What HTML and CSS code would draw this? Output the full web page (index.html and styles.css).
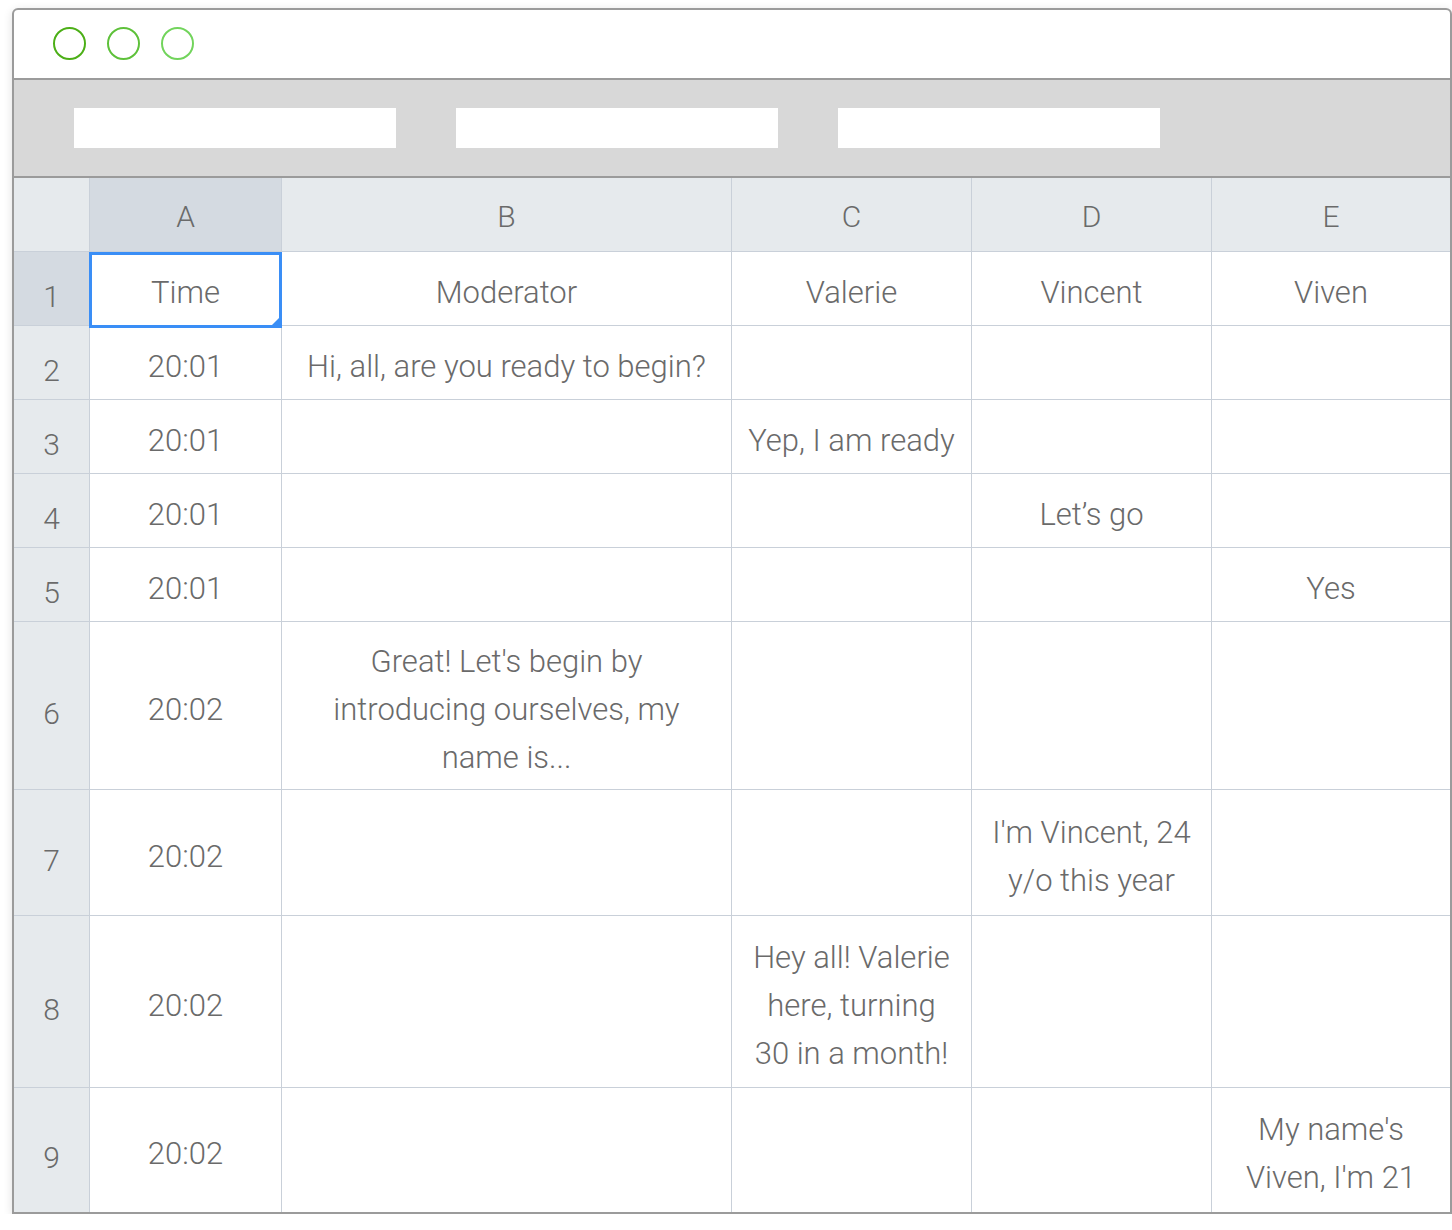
FILE: index.html
```html
<!DOCTYPE html>
<html lang="en">
<head>
<meta charset="utf-8">
<title>Chat transcript spreadsheet</title>
<link rel="stylesheet" href="styles.css">
</head>
<body>
<div class="window">
  <div class="titlebar">
    <span class="dot dot-1"></span>
    <span class="dot dot-2"></span>
    <span class="dot dot-3"></span>
  </div>
  <div class="toolbar">
    <div class="field"></div>
    <div class="field"></div>
    <div class="field"></div>
  </div>
  <div class="sheet">
    <div class="cell corner"></div>
    <div class="cell colhead active">A</div>
    <div class="cell colhead">B</div>
    <div class="cell colhead">C</div>
    <div class="cell colhead">D</div>
    <div class="cell colhead last">E</div>

    <div class="cell rowhead active">1</div>
    <div class="cell selected">Time</div>
    <div class="cell">Moderator</div>
    <div class="cell">Valerie</div>
    <div class="cell">Vincent</div>
    <div class="cell last">Viven</div>

    <div class="cell rowhead">2</div>
    <div class="cell">20:01</div>
    <div class="cell">Hi, all, are you ready to begin?</div>
    <div class="cell"></div>
    <div class="cell"></div>
    <div class="cell last"></div>

    <div class="cell rowhead">3</div>
    <div class="cell">20:01</div>
    <div class="cell"></div>
    <div class="cell">Yep, I am ready</div>
    <div class="cell"></div>
    <div class="cell last"></div>

    <div class="cell rowhead">4</div>
    <div class="cell">20:01</div>
    <div class="cell"></div>
    <div class="cell"></div>
    <div class="cell">Let’s go</div>
    <div class="cell last"></div>

    <div class="cell rowhead">5</div>
    <div class="cell">20:01</div>
    <div class="cell"></div>
    <div class="cell"></div>
    <div class="cell"></div>
    <div class="cell last">Yes</div>

    <div class="cell rowhead">6</div>
    <div class="cell">20:02</div>
    <div class="cell wrap-b">Great! Let's begin by introducing ourselves, my name is...</div>
    <div class="cell"></div>
    <div class="cell"></div>
    <div class="cell last"></div>

    <div class="cell rowhead">7</div>
    <div class="cell">20:02</div>
    <div class="cell"></div>
    <div class="cell"></div>
    <div class="cell">I'm Vincent, 24 y/o this year</div>
    <div class="cell last"></div>

    <div class="cell rowhead">8</div>
    <div class="cell">20:02</div>
    <div class="cell"></div>
    <div class="cell">Hey all! Valerie here, turning 30 in a month!</div>
    <div class="cell"></div>
    <div class="cell last"></div>

    <div class="cell rowhead bottom">9</div>
    <div class="cell bottom">20:02</div>
    <div class="cell bottom"></div>
    <div class="cell bottom"></div>
    <div class="cell bottom"></div>
    <div class="cell last bottom">My name's Viven, I'm 21</div>
  </div>
</div>
</body>
</html>
```

FILE: styles.css
```css
* { box-sizing: border-box; }

html, body {
  margin: 0;
  padding: 0;
  background: #ffffff;
}

body {
  padding: 8px 0 0 12px;
  font-family: Roboto, "Liberation Sans", sans-serif;
  font-weight: 300;
  color: #6a6a6a;
}

.window {
  width: 1440px;
  height: 1206px;
  border: 2px solid #9b9b9b;
  border-radius: 6px 6px 0 0;
  background: #ffffff;
  box-shadow: 0 2px 10px rgba(0, 0, 0, 0.12);
  display: flex;
  flex-direction: column;
  overflow: hidden;
}

.titlebar {
  height: 70px;
  border-bottom: 2px solid #9b9b9b;
  display: flex;
  align-items: center;
  gap: 21px;
  padding: 0 0 2px 39px;
  flex: none;
}

.dot {
  width: 33px;
  height: 33px;
  border-radius: 50%;
  border: 2px solid #4caf17;
}
.dot-2 { border-color: #5ec13a; }
.dot-3 { border-color: #72d45c; }

.toolbar {
  height: 98px;
  background: #d8d8d8;
  border-bottom: 2px solid #9b9b9b;
  display: flex;
  align-items: flex-start;
  gap: 60px;
  padding: 28px 0 0 60px;
  flex: none;
}

.field {
  width: 322px;
  height: 40px;
  background: #ffffff;
}

.sheet {
  display: grid;
  grid-template-columns: 76px 192px 450px 240px 240px 238px;
  grid-template-rows: 74px 74px 74px 74px 74px 74px 168px 126px 172px 124px;
  flex: none;
}

.cell {
  border-right: 1px solid #c9d0d9;
  border-bottom: 1px solid #c9d0d9;
  display: flex;
  align-items: center;
  justify-content: center;
  text-align: center;
  font-size: 31px;
  line-height: 48px;
  padding: 8px 16px 0;
  background: #ffffff;
}

.cell.last { border-right: none; }
.cell.bottom { border-bottom: none; }

.corner,
.colhead,
.rowhead {
  background: #e6eaed;
}

.colhead {
  padding-top: 4px;
  font-size: 30px;
}

.rowhead {
  padding: 16px 0 0;
  font-size: 30px;
}

.colhead.active,
.rowhead.active {
  background: #d4dae1;
}

.wrap-b { padding: 8px 45px 0; }

.selected {
  position: relative;
}

.selected::after {
  content: "";
  position: absolute;
  left: -1px;
  top: 0;
  right: -1px;
  bottom: -3px;
  border: 3px solid #3a8ef6;
  pointer-events: none;
}

.selected::before {
  content: "";
  position: absolute;
  right: 1px;
  bottom: -1px;
  width: 0;
  height: 0;
  border-style: solid;
  border-width: 0 0 9px 9px;
  border-color: transparent transparent #3a8ef6 transparent;
  z-index: 1;
}
```
